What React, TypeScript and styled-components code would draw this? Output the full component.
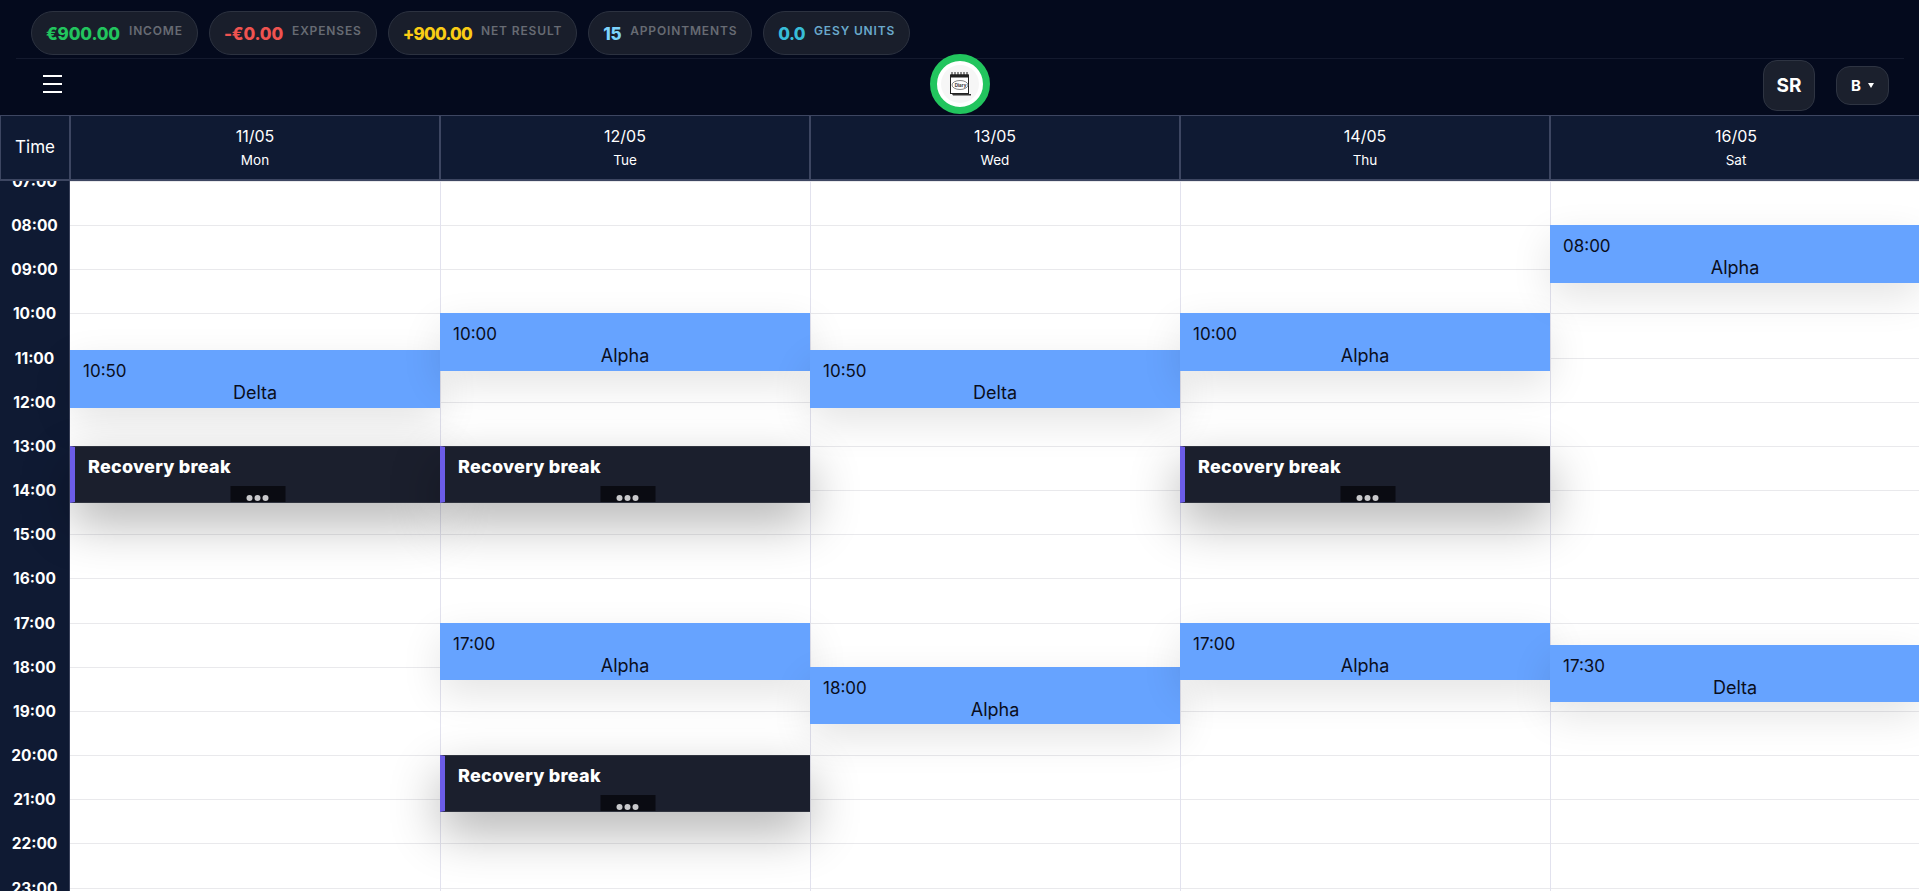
import React from "react";
import styled, { createGlobalStyle } from "styled-components";

const HOUR = 44.16;
const FIRST_HOUR = 7;

const GlobalStyle = createGlobalStyle`
  html, body, #root {
    margin: 0;
    height: 100%;
  }
  body {
    font-family: Inter, "Noto Sans", sans-serif;
    overflow: hidden;
    background: #fff;
  }
`;

const Page = styled.div`
  height: 100vh;
  display: flex;
  flex-direction: column;
  overflow: hidden;
`;

const TopBar = styled.header`
  height: 115px;
  flex: none;
  box-sizing: border-box;
  background: #040a1d;
  padding: 11px 15px 0 16px;
  display: flex;
  flex-direction: column;
`;

const StatsRow = styled.div`
  height: 48px;
  flex: none;
  box-sizing: border-box;
  display: flex;
  gap: 11px;
  padding: 0 0 4px 15px;
  border-bottom: 1px solid #141a2e;
`;

const Pill = styled.div`
  height: 44px;
  box-sizing: border-box;
  border: 1px solid #2c3240;
  border-radius: 22px;
  background: #191e2b;
  padding: 0 14px;
  display: flex;
  align-items: center;
  gap: 9px;
`;

const PillValue = styled.span<{ $color: string; $spacing: number }>`
  color: ${(p) => p.$color};
  font-size: 17px;
  font-weight: 800;
  letter-spacing: ${(p) => p.$spacing}px;
  position: relative;
  top: 1px;
`;

const PillLabel = styled.span<{ $color?: string }>`
  color: ${(p) => p.$color || "#676b73"};
  font-size: 12px;
  font-weight: 600;
  letter-spacing: 0.85px;
  position: relative;
  top: -3px;
`;

const NavRow = styled.div`
  flex: 1;
  position: relative;
  display: flex;
  align-items: center;
  justify-content: space-between;
  padding: 0 15px 3px 27px;
`;

const MenuButton = styled.div`
  width: 19px;
  margin-top: -3px;
  display: flex;
  flex-direction: column;
  gap: 6px;

  span {
    height: 2px;
    background: #fff;
  }
`;

const LogoRing = styled.div`
  position: absolute;
  left: 914px;
  top: -5px;
  width: 60px;
  height: 60px;
  box-sizing: border-box;
  border: 7px solid #22c55e;
  border-radius: 50%;
  background: #fff;
  display: flex;
  align-items: center;
  justify-content: center;
`;

const LogoInner = styled.div`
  width: 38px;
  height: 38px;
  border-radius: 50%;
  background: #f6f6f6;
  display: flex;
  align-items: center;
  justify-content: center;
`;

const NavRight = styled.div`
  display: flex;
  align-items: center;
  gap: 21px;
`;

const UserBadge = styled.div`
  width: 52px;
  height: 51px;
  box-sizing: border-box;
  border: 1px solid #2e3442;
  border-radius: 14px;
  background: #1b202d;
  color: #fff;
  font-size: 19px;
  font-weight: 700;
  display: flex;
  align-items: center;
  justify-content: center;
`;

const BranchSelect = styled.div`
  width: 53px;
  height: 39px;
  box-sizing: border-box;
  border: 1px solid #2e3442;
  border-radius: 14px;
  background: #1b202d;
  color: #fff;
  font-size: 15px;
  font-weight: 700;
  display: flex;
  align-items: center;
  justify-content: center;
  gap: 7px;

  i {
    width: 0;
    height: 0;
    border-left: 3.5px solid transparent;
    border-right: 3.5px solid transparent;
    border-top: 5px solid #fff;
  }
`;

const HeaderRow = styled.div`
  height: 66px;
  flex: none;
  box-sizing: border-box;
  display: grid;
  grid-template-columns: 71px repeat(5, 370px);
  background: #0f1a33;
  border-top: 1px solid #3d4661;
  border-bottom: 2px solid #3d4661;
  color: #fff;
`;

const HeaderCell = styled.div`
  box-sizing: border-box;
  border-right: 2px solid #3d4661;
  padding-bottom: 2px;
  display: flex;
  flex-direction: column;
  align-items: center;
  justify-content: center;
  gap: 6px;

  &:first-child {
    border-left: 1px solid #3d4661;
    font-size: 17px;
  }

  &:last-child {
    border-right: 0;
  }
`;

const HeaderDate = styled.div`
  font-size: 16px;
  line-height: 20px;
`;

const HeaderDay = styled.div`
  font-size: 13.5px;
  line-height: 16px;
`;

const Body = styled.div`
  flex: 1;
  min-height: 0;
  overflow: hidden;
  display: grid;
  grid-template-columns: 70px repeat(5, 370px);
  background: #fff;
`;

const TimeColumn = styled.div`
  background: #0f1a33;
  border-right: 1px solid #39415a;
  box-sizing: border-box;
  overflow: hidden;
`;

const TimeList = styled.div`
  margin-top: ${-HOUR / 2}px;
`;

const TimeLabel = styled.div`
  height: ${HOUR}px;
  display: flex;
  align-items: center;
  justify-content: center;
  color: #fff;
  font-size: 15.5px;
  font-weight: 700;
  position: relative;
  top: 0.5px;
`;

const DayColumn = styled.div`
  position: relative;
  box-sizing: border-box;
  border-left: 1px solid #e2e2ee;

  &:nth-child(2) {
    border-left: 0;
  }
`;

const HourLine = styled.div`
  height: ${HOUR}px;
  box-sizing: border-box;
  border-top: 1px solid #e9e9ec;
`;

const Appointment = styled.div<{ $first: boolean }>`
  position: absolute;
  left: ${(p) => (p.$first ? 0 : -1)}px;
  right: 0;
  height: 57.5px;
  z-index: 1;
  box-sizing: border-box;
  background: #66a3ff;
  color: #0a0e1c;
  padding: 10px 13px 0;
  font-size: 17px;
  line-height: 22px;
  box-shadow: 0 14px 40px rgba(0, 0, 0, 0.11);
`;

const AppointmentName = styled.div`
  text-align: center;
  font-size: 18px;
  line-height: 21px;
`;

const BreakCard = styled.div<{ $first: boolean }>`
  position: absolute;
  left: ${(p) => (p.$first ? 0 : -1)}px;
  right: 0;
  height: 57px;
  z-index: 2;
  box-sizing: border-box;
  background: #1b1f2d;
  border-left: 5px solid #6c5ce7;
  border-top: 1px solid #30343f;
  border-bottom: 1px solid #30343f;
  color: #fff;
  padding: 9px 13px 0;
  font-size: 18px;
  font-weight: 800;
  letter-spacing: 0.25px;
  line-height: 22px;
  box-shadow: 0 20px 50px rgba(0, 0, 0, 0.3);
`;

const MoreTab = styled.div`
  position: absolute;
  left: 50%;
  bottom: 0;
  width: 55px;
  height: 16px;
  transform: translateX(-50%);
  background: #0a0b12;
  display: flex;
  align-items: flex-end;
  justify-content: center;
  gap: 2px;
  padding-bottom: 1px;
  box-sizing: border-box;

  span {
    width: 6px;
    height: 6px;
    border-radius: 50%;
    background: #c9c9cc;
  }
`;

const stats: { value: string; label: string; color: string; labelColor?: string; spacing: number }[] = [
  { value: "€900.00", label: "INCOME", color: "#22c55e", spacing: -0.15 },
  { value: "-€0.00", label: "EXPENSES", color: "#ef5350", spacing: -0.15 },
  { value: "+900.00", label: "NET RESULT", color: "#facc15", spacing: -0.8 },
  { value: "15", label: "APPOINTMENTS", color: "#7dd3fc", spacing: -0.3 },
  { value: "0.0", label: "GESY UNITS", color: "#38bdd8", labelColor: "#6aa9cc", spacing: -0.6 },
];

type Item = { at: number; time?: string; name: string };

const days: { date: string; day: string; items: Item[] }[] = [
  {
    date: "11/05",
    day: "Mon",
    items: [
      { at: 10 + 50 / 60, time: "10:50", name: "Delta" },
      { at: 13, name: "break" },
    ],
  },
  {
    date: "12/05",
    day: "Tue",
    items: [
      { at: 10, time: "10:00", name: "Alpha" },
      { at: 13, name: "break" },
      { at: 17, time: "17:00", name: "Alpha" },
      { at: 20, name: "break" },
    ],
  },
  {
    date: "13/05",
    day: "Wed",
    items: [
      { at: 10 + 50 / 60, time: "10:50", name: "Delta" },
      { at: 18, time: "18:00", name: "Alpha" },
    ],
  },
  {
    date: "14/05",
    day: "Thu",
    items: [
      { at: 10, time: "10:00", name: "Alpha" },
      { at: 13, name: "break" },
      { at: 17, time: "17:00", name: "Alpha" },
    ],
  },
  {
    date: "16/05",
    day: "Sat",
    items: [
      { at: 8, time: "08:00", name: "Alpha" },
      { at: 17.5, time: "17:30", name: "Delta" },
    ],
  },
];

const hours = Array.from({ length: 17 }, (_, i) => i + FIRST_HOUR);

function LogoMark() {
  return (
    <svg width="24" height="25" viewBox="0 0 24 25" aria-hidden="true">
      <rect x="2.5" y="3" width="18" height="18.5" fill="#fff" stroke="#222" strokeWidth="1" />
      <rect x="2.5" y="2.5" width="18" height="3" fill="#222" />
      {[4, 7, 10, 13, 16, 19].map((x) => (
        <rect key={x} x={x - 0.5} y="0" width="1" height="4" fill="#222" />
      ))}
      <path d="M4 22 L23 22 L23 23.5 L5 23.5 Z" fill="#333" />
      <ellipse cx="12" cy="13" rx="8" ry="4.5" fill="none" stroke="#666" strokeWidth="0.8" />
      <text x="12.5" y="14.5" textAnchor="middle" fontSize="4.5" fontWeight="700" fill="#333" fontFamily="Inter, sans-serif">
        Diary
      </text>
    </svg>
  );
}

export default function App() {
  return (
    <Page>
      <GlobalStyle />
      <TopBar>
        <StatsRow>
          {stats.map((s) => (
            <Pill key={s.label}>
              <PillValue $color={s.color} $spacing={s.spacing}>
                {s.value}
              </PillValue>
              <PillLabel $color={s.labelColor}>{s.label}</PillLabel>
            </Pill>
          ))}
        </StatsRow>
        <NavRow>
          <MenuButton>
            <span />
            <span />
            <span />
          </MenuButton>
          <LogoRing>
            <LogoInner>
              <LogoMark />
            </LogoInner>
          </LogoRing>
          <NavRight>
            <UserBadge>SR</UserBadge>
            <BranchSelect>
              B<i />
            </BranchSelect>
          </NavRight>
        </NavRow>
      </TopBar>
      <HeaderRow>
        <HeaderCell>Time</HeaderCell>
        {days.map((d) => (
          <HeaderCell key={d.date}>
            <HeaderDate>{d.date}</HeaderDate>
            <HeaderDay>{d.day}</HeaderDay>
          </HeaderCell>
        ))}
      </HeaderRow>
      <Body>
        <TimeColumn>
          <TimeList>
            {hours.map((h) => (
              <TimeLabel key={h}>{String(h).padStart(2, "0")}:00</TimeLabel>
            ))}
          </TimeList>
        </TimeColumn>
        {days.map((d, i) => (
          <DayColumn key={d.date}>
            {hours.map((h) => (
              <HourLine key={h} />
            ))}
            {d.items.map((item) =>
              item.name === "break" ? (
                <BreakCard key={item.at} $first={i === 0} style={{ top: (item.at - FIRST_HOUR) * HOUR }}>
                  Recovery break
                  <MoreTab>
                    <span />
                    <span />
                    <span />
                  </MoreTab>
                </BreakCard>
              ) : (
                <Appointment key={item.at} $first={i === 0} style={{ top: (item.at - FIRST_HOUR) * HOUR }}>
                  {item.time}
                  <AppointmentName>{item.name}</AppointmentName>
                </Appointment>
              )
            )}
          </DayColumn>
        ))}
      </Body>
    </Page>
  );
}
